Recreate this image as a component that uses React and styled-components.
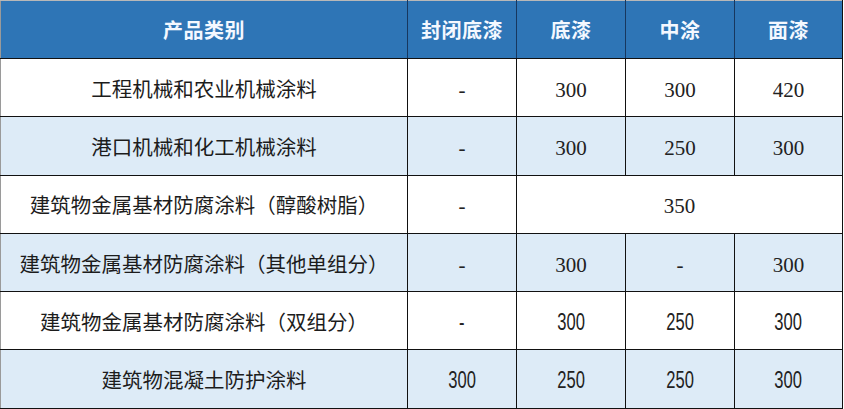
import React from 'react';
import styled, { createGlobalStyle } from 'styled-components';

const GlobalStyle = createGlobalStyle`
  html, body {
    margin: 0;
    padding: 0;
    background: #ffffff;
  }
`;

const Table = styled.table`
  width: 842px;
  border-collapse: collapse;
  table-layout: fixed;
  border-left: 1px solid #9a9a9a;
  border-top: 1px solid #b8b8b8;
  border-right: 1.5px solid #111;
`;

const Col = styled.col`
  width: ${p => p.$w}px;
`;

const HeadRow = styled.tr`
  height: 58px;
  background: #2e75b6;
`;

const HeadCell = styled.th`
  color: #f4f8ff;
  font-family: "Noto Sans CJK SC", sans-serif;
  font-weight: 700;
  font-size: 20px;
  letter-spacing: 0.5px;
  text-align: center;
  padding: 0;
  border-left: 1.5px solid #17375e;
  border-bottom: 1.5px solid #111;
  &:first-child {
    border-left: none;
  }
`;

const Row = styled.tr`
  height: 58.3px;
  background: ${p => (p.$shade ? '#ddebf7' : '#ffffff')};
`;

const Cell = styled.td`
  font-family: "Noto Sans CJK SC", sans-serif;
  font-size: 20.5px;
  color: #1c1c1c;
  text-align: center;
  padding: 0;
  white-space: nowrap;
  border-left: 1.5px solid #111;
  border-bottom: 1.5px solid #111;
  &:first-child {
    border-left: none;
  }
`;

// 前四行数字为宋体风格的衬线数字
const SerifNum = styled.span`
  font-family: "Liberation Serif", "DejaVu Serif", serif;
  font-weight: 400;
  font-size: 21px;
  color: #222;
`;

// 后两行数字为瘦长的无衬线数字
const NarrowNum = styled.span`
  display: inline-block;
  font-family: "Liberation Sans", "DejaVu Sans", sans-serif;
  font-weight: 400;
  font-size: 23px;
  color: #222;
  transform: scaleX(0.72);
`;

const rows = [
  { name: '工程机械和农业机械涂料', vals: ['-', '300', '300', '420'], narrow: false },
  { name: '港口机械和化工机械涂料', vals: ['-', '300', '250', '300'], narrow: false },
  { name: '建筑物金属基材防腐涂料（醇酸树脂）', vals: ['-', '350'], span: true, narrow: false },
  { name: '建筑物金属基材防腐涂料（其他单组分）', vals: ['-', '300', '-', '300'], narrow: false },
  { name: '建筑物金属基材防腐涂料（双组分）', vals: ['-', '300', '250', '300'], narrow: true },
  { name: '建筑物混凝土防护涂料', vals: ['300', '250', '250', '300'], narrow: true },
];

const headers = ['产品类别', '封闭底漆', '底漆', '中涂', '面漆'];
const widths = [407, 109, 109, 109, 108];

export default function App() {
  return (
    <>
      <GlobalStyle />
      <Table>
        <colgroup>
          {widths.map((w, i) => (
            <Col key={i} $w={w} />
          ))}
        </colgroup>
        <thead>
          <HeadRow>
            {headers.map(h => (
              <HeadCell key={h}>{h}</HeadCell>
            ))}
          </HeadRow>
        </thead>
        <tbody>
          {rows.map((r, i) => {
            const Num = r.narrow ? NarrowNum : SerifNum;
            return (
              <Row key={r.name} $shade={i % 2 === 1}>
                <Cell>{r.name}</Cell>
                {r.vals.map((v, j) => (
                  <Cell key={j} colSpan={r.span && j === 1 ? 3 : 1}>
                    <Num>{v}</Num>
                  </Cell>
                ))}
              </Row>
            );
          })}
        </tbody>
      </Table>
    </>
  );
}
